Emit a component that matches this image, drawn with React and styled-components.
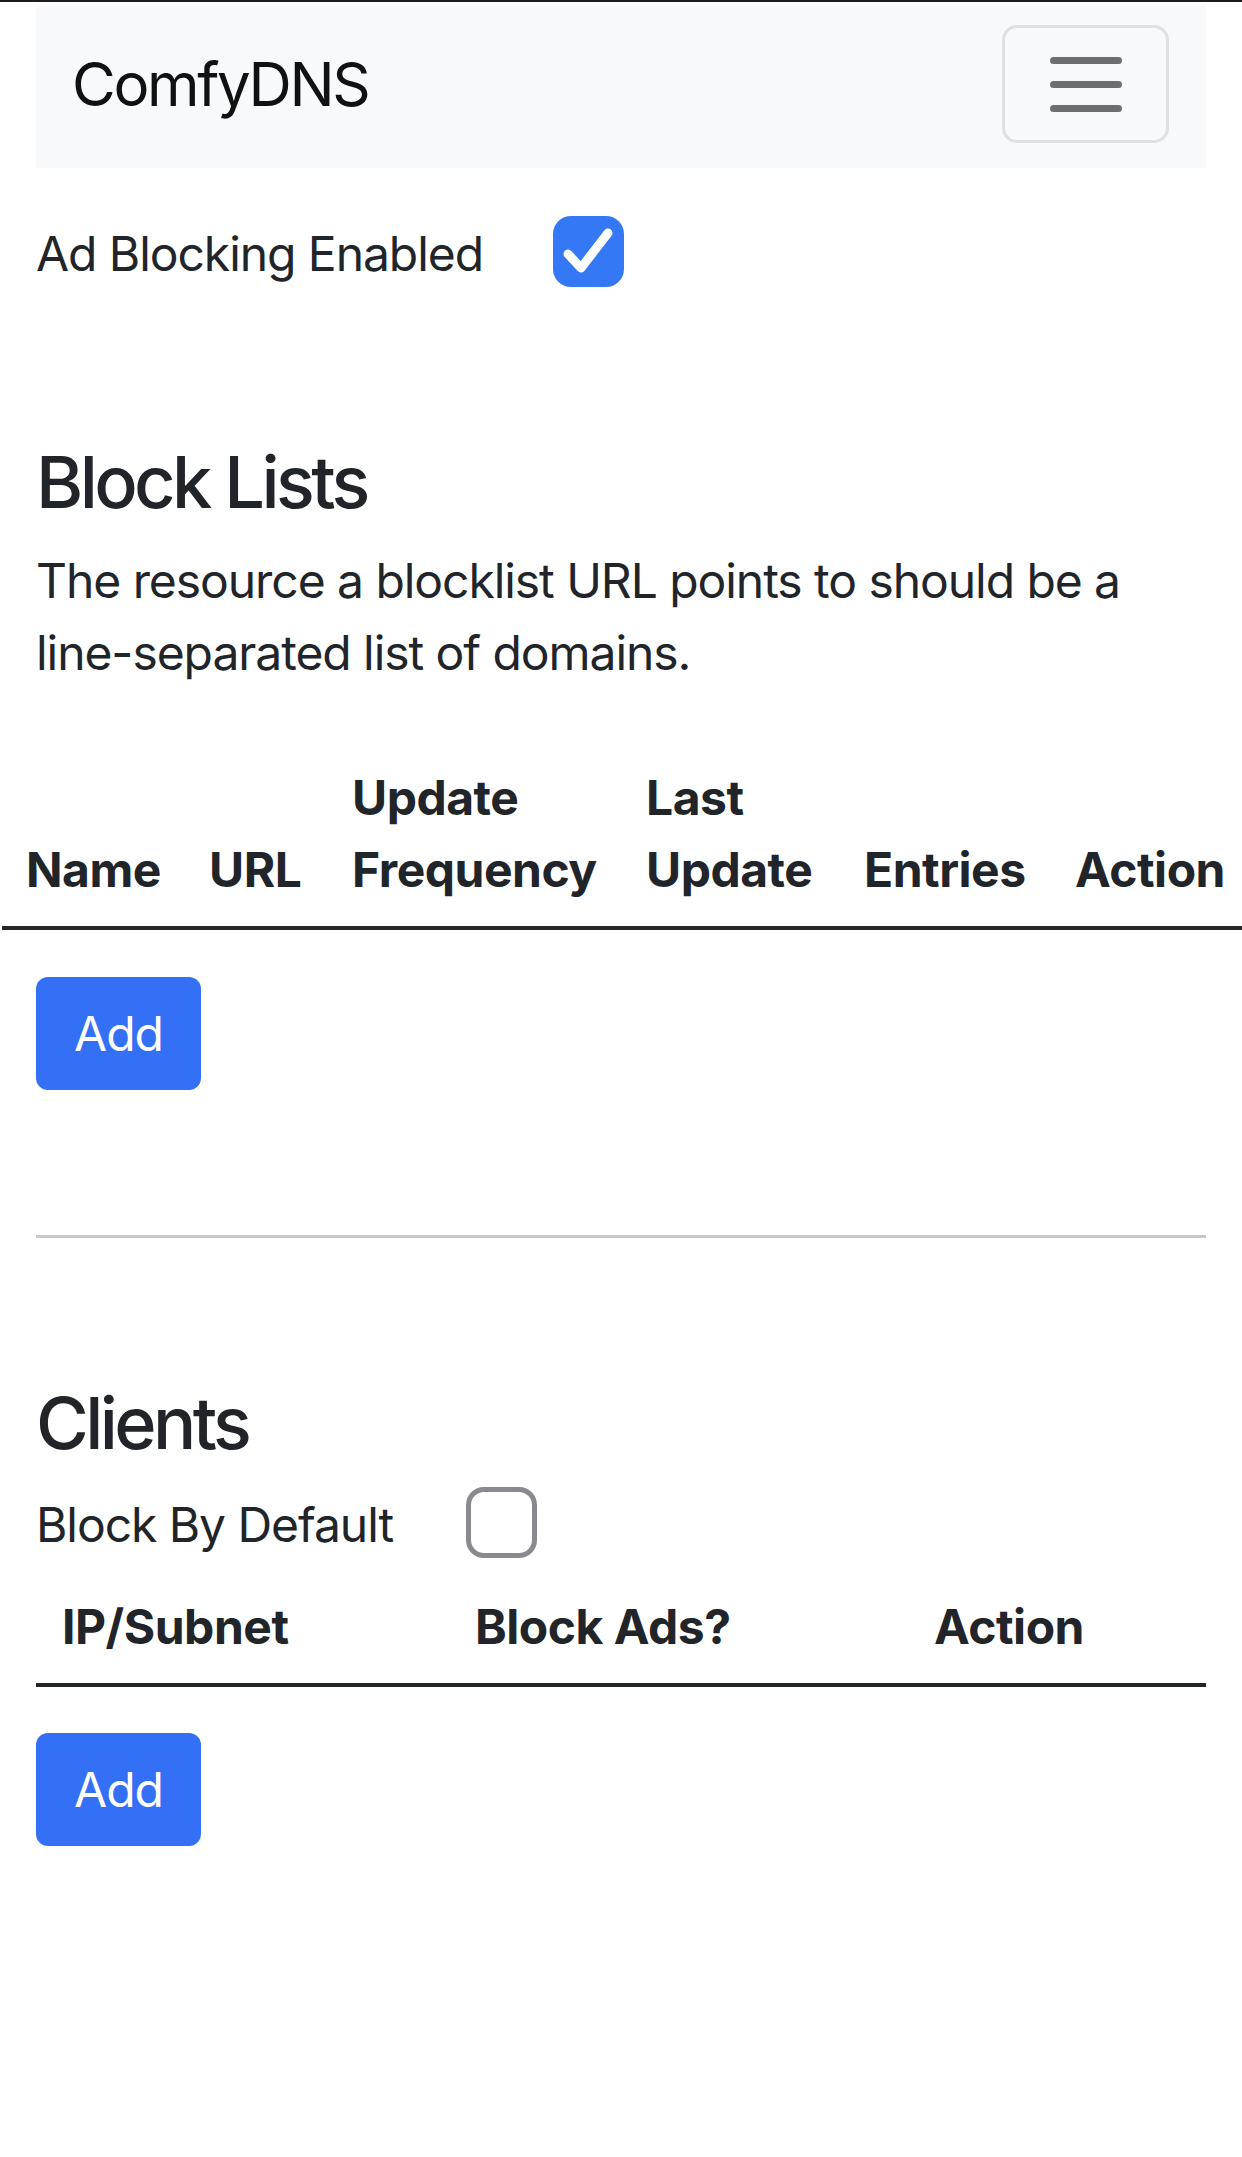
import React from "react";
import styled, { createGlobalStyle } from "styled-components";

const GlobalStyle = createGlobalStyle`
  html, body {
    margin: 0;
    padding: 0;
    background: #fff;
    overflow-x: hidden;
  }
  body {
    font-family: Inter, "Noto Sans", "Liberation Sans", sans-serif;
    font-size: 48px;
    line-height: 1.5;
    letter-spacing: -0.022em;
    color: #212529;
  }
  * {
    box-sizing: border-box;
  }
`;

const TopLine = styled.div`
  height: 2px;
  background: #1c1c1e;
  margin-bottom: 4px;
`;

const Container = styled.div`
  padding: 0 36px;
`;

const Navbar = styled.nav`
  display: flex;
  align-items: center;
  justify-content: space-between;
  height: 162px;
  padding: 0 37px 0 36px;
  background: #f8f9fa;
`;

const Brand = styled.div`
  margin-top: -6px;
  font-size: 60px;
  line-height: 1.5;
  letter-spacing: -0.04em;
  color: #111;
`;

const Toggler = styled.button`
  display: flex;
  flex-direction: column;
  align-items: center;
  justify-content: center;
  gap: 17px;
  width: 167px;
  height: 118px;
  margin-top: -6px;
  padding: 0;
  background: transparent;
  border: 3px solid #e0e0e0;
  border-radius: 15px;
`;

const TogglerBar = styled.span`
  display: block;
  width: 72px;
  height: 7px;
  border-radius: 4px;
  background: #6e6e6e;
`;

const CheckRow = styled.div`
  display: flex;
  align-items: center;
  gap: ${(p) => p.$gap}px;
  margin-top: ${(p) => p.$top}px;
`;

const Label = styled.span`
  line-height: 72px;
  padding-top: 6px;
`;

const Box = styled.span`
  display: flex;
  align-items: center;
  justify-content: center;
  width: 71px;
  height: 71px;
  border-radius: 18px;
  background: ${(p) => (p.$checked ? "#3478f6" : "#fff")};
  border: ${(p) => (p.$checked ? "none" : "5px solid #8a8a8e")};
`;

const Heading = styled.h2`
  margin: ${(p) => p.$top}px 0 0;
  font-size: 72px;
  font-weight: 500;
  line-height: 90px;
  letter-spacing: -0.05em;
`;

const Para = styled.p`
  margin: 18px 0 0;
  line-height: 72px;
`;

const Table = styled.table`
  table-layout: fixed;
  border-collapse: collapse;
  width: ${(p) => p.$width}px;
  margin: ${(p) => p.$top}px 0 0 ${(p) => p.$left}px;
`;

const Th = styled.th`
  width: ${(p) => p.$w}px;
  padding: 24px 0 20px ${(p) => p.$pad || 24}px;
  text-align: left;
  vertical-align: bottom;
  font-weight: 700;
  line-height: 72px;
  letter-spacing: -0.01em;
  border-bottom: 4px solid #222529;
  white-space: nowrap;
`;

const AddButton = styled.button`
  display: block;
  margin-top: ${(p) => p.$top}px;
  width: 165px;
  height: 113px;
  padding: 0;
  font-family: inherit;
  font-size: 48px;
  letter-spacing: -0.02em;
  color: #fff;
  background: #3370f5;
  border: none;
  border-radius: 12px;
`;

const Rule = styled.hr`
  margin: 145px 0 0;
  border: none;
  height: 3px;
  background: #c8c8c8;
`;

const Checkbox = ({ checked }) => (
  <Box $checked={checked}>
    {checked && (
      <svg width="71" height="71" viewBox="0 0 71 71">
        <path
          d="M15 38 L28 52 L55 17"
          fill="none"
          stroke="#fff"
          strokeWidth="9"
          strokeLinecap="round"
          strokeLinejoin="round"
        />
      </svg>
    )}
  </Box>
);

const blockCols = [
  { w: 183, label: "Name" },
  { w: 143, label: "URL" },
  { w: 294, label: ["Update", "Frequency"] },
  { w: 218, label: ["Last", "Update"] },
  { w: 211, label: "Entries" },
  { w: 197, label: "Action" },
];

const clientCols = [
  { w: 413, label: "IP/Subnet" },
  { w: 459, label: "Block Ads?" },
  { w: 298, label: "Action" },
];

const HeaderRow = ({ cols, pad }) => (
  <thead>
    <tr>
      {cols.map((c, i) => (
        <Th key={i} $w={c.w} $pad={pad}>
          {Array.isArray(c.label) ? (
            <>
              {c.label[0]}
              <br />
              {c.label[1]}
            </>
          ) : (
            c.label
          )}
        </Th>
      ))}
    </tr>
  </thead>
);

export default function App() {
  return (
    <>
      <GlobalStyle />
      <TopLine />
      <Container>
        <Navbar>
          <Brand>ComfyDNS</Brand>
          <Toggler aria-label="Toggle navigation">
            <TogglerBar />
            <TogglerBar />
            <TogglerBar />
          </Toggler>
        </Navbar>

        <CheckRow $top={44} $gap={70}>
          <Label>Ad Blocking Enabled</Label>
          <Checkbox checked />
        </CheckRow>

        <Heading $top={147}>Block Lists</Heading>
        <Para>
          The resource a blocklist URL points to should be a line-separated
          list of domains.
        </Para>

        <Table $width={1246} $top={49} $left={-34}>
          <HeaderRow cols={blockCols} />
        </Table>
        <AddButton $top={47}>Add</AddButton>

        <Rule />

        <Heading $top={140}>Clients</Heading>
        <CheckRow $top={15} $gap={73}>
          <Label>Block By Default</Label>
          <Checkbox />
        </CheckRow>

        <Table $width={1170} $top={6} $left={0}>
          <HeaderRow cols={clientCols} pad={26} />
        </Table>
        <AddButton $top={46}>Add</AddButton>
      </Container>
    </>
  );
}
